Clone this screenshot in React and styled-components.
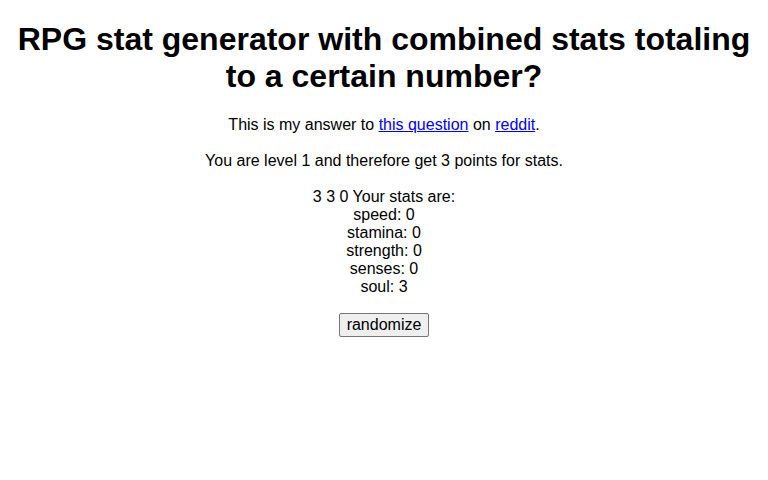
import React, { useState } from 'react';
import styled, { createGlobalStyle } from 'styled-components';

const GlobalStyle = createGlobalStyle`
  body {
    margin: 0 8px 8px;
    font-family: "Liberation Sans", Arial, sans-serif;
    background: #fff;
    color: #000;
  }
`;

const Page = styled.div`
  text-align: center;
`;

const Title = styled.h1`
  font-size: 32px;
  font-weight: bold;
  line-height: 37px;
  margin: 21px 0;
`;

const Para = styled.p`
  font-size: 16px;
  margin: 18px 0;
`;

const Stats = styled.div`
  font-size: 16px;
  line-height: 18px;
  margin: 18px 0 17px;
`;

const Button = styled.button`
  font-family: "Liberation Sans", Arial, sans-serif;
  font-size: 16px;
  padding: 2px 7px;
  background: #efefef;
  border: 1px solid #767676;
  border-radius: 2px;
  color: #000;
`;

const stats = ['speed', 'stamina', 'strength', 'senses', 'soul'];

export default function App() {
  const [values, setValues] = useState([0, 0, 0, 0, 3]);

  const randomize = () => {
    const next = [0, 0, 0, 0, 0];
    for (let i = 0; i < 3; i++) next[Math.floor(Math.random() * 5)]++;
    setValues(next);
  };

  return (
    <Page>
      <GlobalStyle />
      <Title>RPG stat generator with combined stats totaling to a certain number?</Title>
      <Para>
        This is my answer to <a href="#">this question</a> on <a href="#">reddit</a>.
      </Para>
      <Para>You are level 1 and therefore get 3 points for stats.</Para>
      <Stats>
        3 3 0 Your stats are:
        {stats.map((s, i) => (
          <div key={s}>{s}: {values[i]}</div>
        ))}
      </Stats>
      <Button onClick={randomize}>randomize</Button>
    </Page>
  );
}
